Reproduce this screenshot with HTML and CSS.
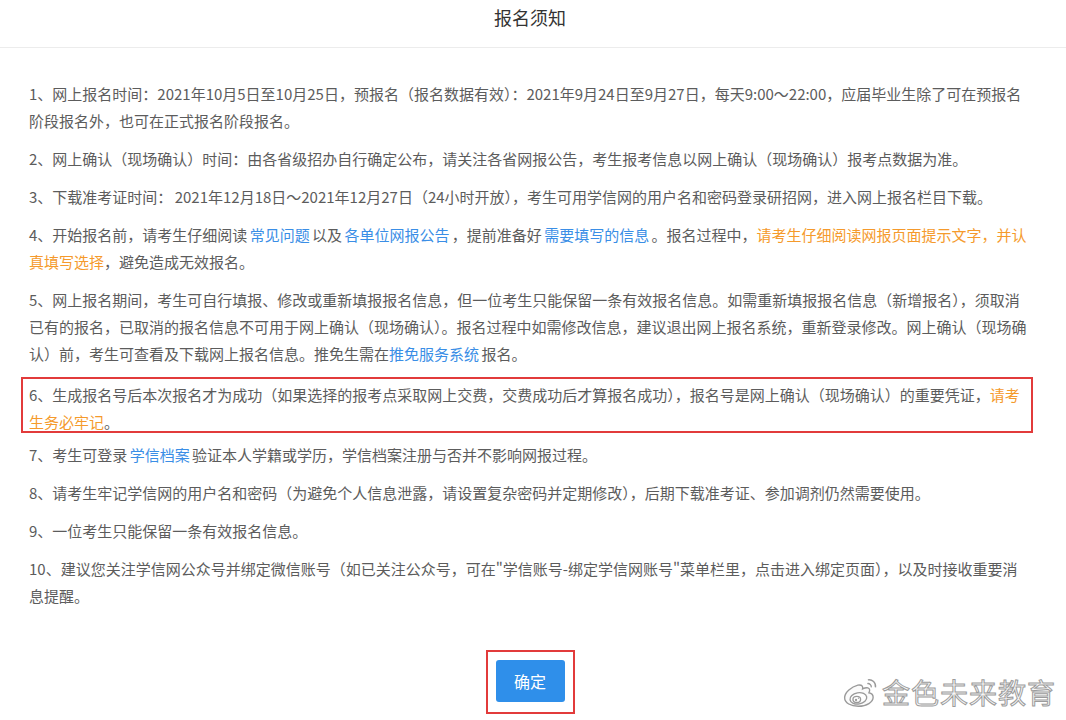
FILE: index.html
```html
<!DOCTYPE html>
<html lang="zh-CN">
<head>
<meta charset="utf-8">
<title>报名须知</title>
<link rel="stylesheet" href="styles.css">
</head>
<body>
<div class="dialog">
  <div class="dialog-header">报名须知</div>
  <div class="dialog-body">
    <p>1、网上报名时间：2021年10月5日至10月25日，预报名（报名数据有效）：2021年9月24日至9月27日，每天9:00～22:00，应届毕业生除了可在预报名阶段报名外，也可在正式报名阶段报名。</p>
    <p>2、网上确认（现场确认）时间：由各省级招办自行确定公布，请关注各省网报公告，考生报考信息以网上确认（现场确认）报考点数据为准。</p>
    <p>3、下载准考证时间：&nbsp;2021年12月18日～2021年12月27日（24小时开放），考生可用学信网的用户名和密码登录研招网，进入网上报名栏目下载。</p>
    <p>4、开始报名前，请考生仔细阅读 <a class="link">常见问题</a> 以及 <a class="link">各单位网报公告</a> ，提前准备好 <a class="link">需要填写的信息</a> 。报名过程中，<span class="warn">请考生仔细阅读网报页面提示文字，并认真填写选择</span>，避免造成无效报名。</p>
    <p>5、网上报名期间，考生可自行填报、修改或重新填报报名信息，但一位考生只能保留一条有效报名信息。如需重新填报报名信息（新增报名），须取消已有的报名，已取消的报名信息不可用于网上确认（现场确认）。报名过程中如需修改信息，建议退出网上报名系统，重新登录修改。网上确认（现场确认）前，考生可查看及下载网上报名信息。推免生需在<a class="link">推免服务系统</a> 报名。</p>
    <p class="marked">6、生成报名号后本次报名才为成功（如果选择的报考点采取网上交费，交费成功后才算报名成功），报名号是网上确认（现场确认）的重要凭证，<span class="warn">请考生务必牢记</span>。</p>
    <p>7、考生可登录 <a class="link">学信档案</a> 验证本人学籍或学历，学信档案注册与否并不影响网报过程。</p>
    <p>8、请考生牢记学信网的用户名和密码（为避免个人信息泄露，请设置复杂密码并定期修改），后期下载准考证、参加调剂仍然需要使用。</p>
    <p>9、一位考生只能保留一条有效报名信息。</p>
    <p>10、建议您关注学信网公众号并绑定微信账号（如已关注公众号，可在"学信账号-绑定学信网账号"菜单栏里，点击进入绑定页面），以及时接收重要消息提醒。</p>
  </div>
  <div class="dialog-footer">
    <div class="btn-frame"><button class="btn-primary" type="button">确定</button></div>
  </div>
</div>
<div class="watermark">
  <svg class="weibo" width="38" height="34" viewBox="0 0 36 32" fill="none" stroke="#9a9a9a" stroke-width="1.3">
    <path d="M15 9.5c-6 1.5-12.5 7-12.5 12 0 5 6 8 13 8 8 0 14-4 14-8.5 0-3-2.5-4-4-4.3 1-2 1.2-4-1-4.6-1.8-.5-4 .5-5 1 .4-1.8.3-4.2-4.5-3.6z" fill="#fbfbfb"/>
    <ellipse cx="15.5" cy="22" rx="8" ry="5.3" transform="rotate(-10 15.5 22)" fill="#fff"/>
    <ellipse cx="14" cy="23" rx="3.6" ry="2.8" fill="#fff"/>
    <circle cx="13.3" cy="23.6" r="1.1" fill="#9a9a9a" stroke="none"/>
    <circle cx="15.6" cy="21.9" r="0.6" fill="#9a9a9a" stroke="none"/>
    <path d="M24.5 4.5c4-0.8 8 2.6 7.2 7.2"/>
    <path d="M24 8c2-0.4 4.2 1.3 3.7 3.6"/>
  </svg>
  <span class="wm-text">金色未来教育</span>
</div>
</body>
</html>
```

FILE: styles.css
```css
html, body {
  margin: 0;
  padding: 0;
  background: #ffffff;
}

body {
  width: 1066px;
  height: 720px;
  overflow: hidden;
  position: relative;
  font-family: "Noto Sans CJK SC", "Noto Sans", sans-serif;
  color: #5c5c5c;
}

.dialog {
  display: flex;
  flex-direction: column;
}

.dialog-header {
  height: 48px;
  box-sizing: border-box;
  padding: 5px 6px 0 0;
  line-height: 24px;
  font-size: 18px;
  color: #333333;
  text-align: center;
  border-bottom: 1px solid #ececec;
}

.dialog-body {
  padding: 32px 36px 0 29px;
  font-size: 15px;
  line-height: 27px;
  word-spacing: -1px;
}

.dialog-body p {
  margin: 0 0 11px 0;
}

.link {
  color: #3a8ee6;
  text-decoration: none;
}

.warn {
  color: #f59a2c;
}

.dialog-body p.marked {
  position: relative;
  margin-top: 14px;
  margin-bottom: 6px;
}

.dialog-body p.marked::before {
  content: "";
  position: absolute;
  top: -4px;
  bottom: 2px;
  left: -8px;
  right: -3px;
  border: 2px solid #e23b3b;
  pointer-events: none;
}

.dialog-footer {
  display: flex;
  justify-content: center;
  padding: 30px 6px 0 0;
}

.btn-frame {
  border: 2px solid #e23b3b;
  padding: 8px 8px 10px 8px;
  display: flex;
}

.btn-primary {
  width: 69px;
  height: 42px;
  border: none;
  border-radius: 3px;
  background: #2f8fea;
  color: #ffffff;
  font-family: "Noto Sans CJK SC", sans-serif;
  font-size: 16px;
  padding: 0;
}

.watermark {
  position: absolute;
  right: 10px;
  top: 675px;
  display: flex;
  align-items: center;
  gap: 2px;
}

.weibo {
  display: block;
}

.wm-text {
  font-family: "Noto Sans CJK SC", sans-serif;
  font-size: 28px;
  line-height: 34px;
  letter-spacing: 1px;
  color: #f7f7f7;
  -webkit-text-stroke: 1px #9c9c9c;
}
```
